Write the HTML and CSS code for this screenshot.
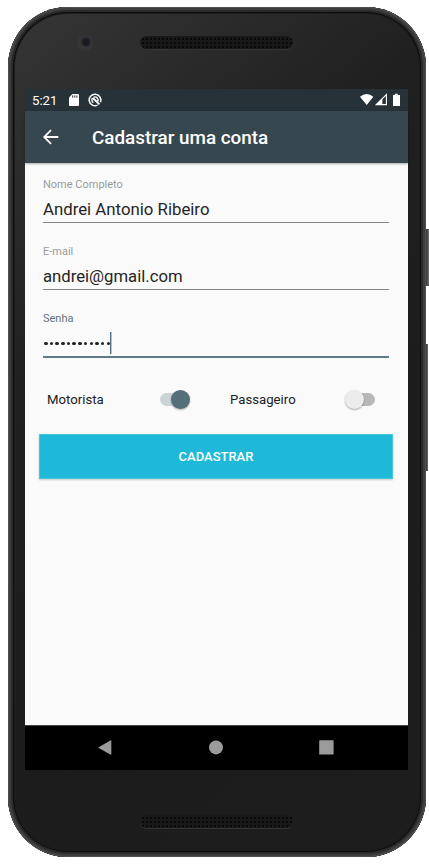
FILE: index.html
```html
<!DOCTYPE html>
<html lang="pt-BR">
<head>
<meta charset="utf-8">
<title>Cadastrar uma conta</title>
<link rel="stylesheet" href="styles.css">
</head>
<body>
<div class="phone">
  <i class="side power"></i>
  <i class="side volume"></i>
  <div class="bezel top"><i class="camera"></i><i class="speaker"></i></div>
  <main class="screen">
    <div class="status">
      <span class="time">5:21</span>
      <svg class="sd" width="10" height="12" viewBox="0 0 10 12"><path d="M3.4 0H9a1 1 0 0 1 1 1v10a1 1 0 0 1-1 1H1a1 1 0 0 1-1-1V3.4z" fill="#fff"/><path d="M3.7 1.4v2.3M5.8 1.4v2.3M7.9 1.4v2.3" stroke="#263238" stroke-width="1"/></svg>
      <svg class="sync" width="14" height="14" viewBox="0 0 14 14" fill="none" stroke="#fff"><path d="M9.6 12.2A5.8 5.8 0 1 1 12.4 9.2" stroke-width="1.5"/><path d="M5.4 9.6A3.1 3.1 0 0 1 4.4 5.2M5.9 4.1A3.1 3.1 0 0 1 9.7 8.4" stroke-width="1.4"/><path d="M4.6 4.8L11.4 11.4" stroke-width="1.9"/></svg>
      <svg class="signals" width="41" height="14" viewBox="0 0 41 14"><path d="M0 3.8Q6.7-1.7 13.4 3.8L6.7 12z" fill="#fff"/><path d="M16.3 11.6L26.4 1.5v10.1z" fill="none" stroke="#fff" stroke-width="1.1"/><path d="M15.4 12L22.4 5v7z" fill="#fff"/><path d="M34.8.8h3v1.3H40V13h-7V2.1h1.8z" fill="#fff"/></svg>
    </div>
    <header class="bar">
      <svg width="16" height="16" viewBox="0 0 16 16" fill="none" stroke="#fff" stroke-width="1.8"><path d="M15.3 8H1.4M8 1.2L1.2 8 8 14.8"/></svg>
      <h1>Cadastrar uma conta</h1>
    </header>
    <form class="form">
      <div class="field"><label>Nome Completo</label><div class="value name">Andrei Antonio Ribeiro</div></div>
      <div class="field"><label>E-mail</label><div class="value mail">andrei@gmail.com</div></div>
      <div class="field active"><label>Senha</label><div class="value">
        <span class="dots"><i></i><i></i><i></i><i></i><i></i><i></i><i></i><i></i><i></i><i></i><i></i><i></i></span><span class="caret"></span>
      </div></div>
      <div class="switches">
        <span class="driver">Motorista</span><span class="switch on"><i></i></span>
        <span class="rider">Passageiro</span><span class="switch"><i></i></span>
      </div>
      <button class="submit" type="button">CADASTRAR</button>
    </form>
    <nav class="nav">
      <svg width="383" height="44" viewBox="0 0 383 44" fill="#9b9b9b"><path d="M73.3 21.4L85.3 14.4q1-.5 1 .5v13.2q0 1-1 .5L73.3 21.8z"/><circle cx="191" cy="21.4" r="7"/><rect x="294.2" y="14.2" width="14.4" height="14.4" rx=".6"/></svg>
    </nav>
  </main>
  <div class="bezel bottom"><i class="speaker"></i></div>
</div>
</body>
</html>
```
FILE: styles.css
```css
* { box-sizing: border-box; }
body { margin: 0; height: 867px; overflow: hidden; background: #fff; font-family: Roboto, sans-serif; }
.phone {
  position: relative;
  width: 418px; height: 850px;
  margin: 7px 0 0 8px;
  padding: 0 0 0 17px;
  float: left;
  border-radius: 60px;
  background: linear-gradient(140deg, #363637 0, #2b2b2b 16%, #202020 32%, #1c1c1c 60%, #1d1d1e 100%);
  box-shadow: inset 0 0 0 1px #505050, inset 0 0 0 3px #3e3d3e, inset 0 0 0 5px #2a2a2a, inset 0 0 0 6px #0d0d0d, inset 0 0 0 7px #1d1d1d;
}
.side { position: absolute; background: linear-gradient(90deg, #333, #707070); }
.power { left: 418px; top: 222px; width: 3px; height: 57px; }
.volume { left: 418px; top: 337px; width: 2px; height: 127px; }
.bezel { width: 383px; height: 82px; display: flex; }
.camera {
  width: 16px; height: 16px; margin: 28px 0 0 52px; border-radius: 50%;
  background: radial-gradient(circle at 9px 7px, #1b1820 0 3px, #29262e 4px, #363637 6px, #363637 8px);
}
.speaker {
  width: 153px; height: 13px; border-radius: 7px;
  background: radial-gradient(circle, #080808 0 .8px, transparent 1.2px) 1px 1px / 4px 4px, #191919;
  box-shadow: 0 1px 0 #343434;
}
.top .speaker { margin: 29px 0 0 47px; }
.bottom .speaker { margin: 45px 0 0 115px; }
.screen { width: 383px; height: 681px; background: #fafafa; display: flex; flex-direction: column; }
.status { height: 22px; background: #263238; display: flex; align-items: center; padding-left: 7px; color: #fff; }
.time { width: 37px; font-size: 13.2px; line-height: 22px; padding-top: 1px; }
.sync { margin-left: 9px; }
.signals { margin-left: auto; margin-right: 7px; }
.bar { height: 52px; flex: none; display: flex; align-items: center; padding-left: 18px; background: #37474f; box-shadow: 0 1px 2px #0005; }
.bar h1 { margin: 0 0 0 33px; font-size: 18.85px; line-height: 26px; font-weight: 500; color: #fff; white-space: nowrap; padding-top: 2px; }
.form { flex: 1; padding: 15px 15px 0 14px; }
.field { height: 67px; margin: 0 4px 0 4px; }
.field label { display: block; height: 14px; font-size: 11px; line-height: 13px; color: #9b9b9b; }
.value { height: 31px; border-bottom: 1px solid #858585; line-height: 35px; color: #252525; white-space: nowrap; }
.name { font-size: 16.8px; }
.mail { font-size: 16.7px; }
.active label { color: #62747e; }
.active .value { height: 32px; border-bottom: 2px solid #607b88; display: flex; }
.dots { display: flex; gap: 2.1px; padding: 15.5px 0 0 1px; }
.dots i { width: 3.6px; height: 3.6px; border-radius: 50%; background: #222; }
.caret { width: 1px; height: 22px; margin: 6px 0 0 0; background: #536f7b; box-shadow: 1px 0 #536f7b66; }
.switches { height: 40px; display: grid; grid-template-columns: 113px 70px 116px 1fr; align-items: center; padding-left: 8px; font-size: 13.2px; color: #202020; }
.switch { width: 29px; height: 13px; border-radius: 7px; background: #b8b8b8; display: flex; align-items: center; }
.switch i { flex: none; width: 19px; height: 19px; margin-left: -1px; border-radius: 50%; background: #ececec; box-shadow: 0 1px 2px #0005; }
.switch.on { background: #cdd4d8; }
.switch.on i { background: #546e7a; margin-left: 11px; }
.submit {
  display: block; width: 354px; height: 45px; margin: 15px 0 0; padding: 1px 0 0;
  border: 1px solid #49c5dc; background: #1eb9d8; color: #fff;
  font: 500 13px/42px Roboto, sans-serif; box-shadow: 0 1px 2px #0003;
}
.nav { height: 45px; border-top: 1px solid #454545; background: #000; }
.nav svg { display: block; }
```
